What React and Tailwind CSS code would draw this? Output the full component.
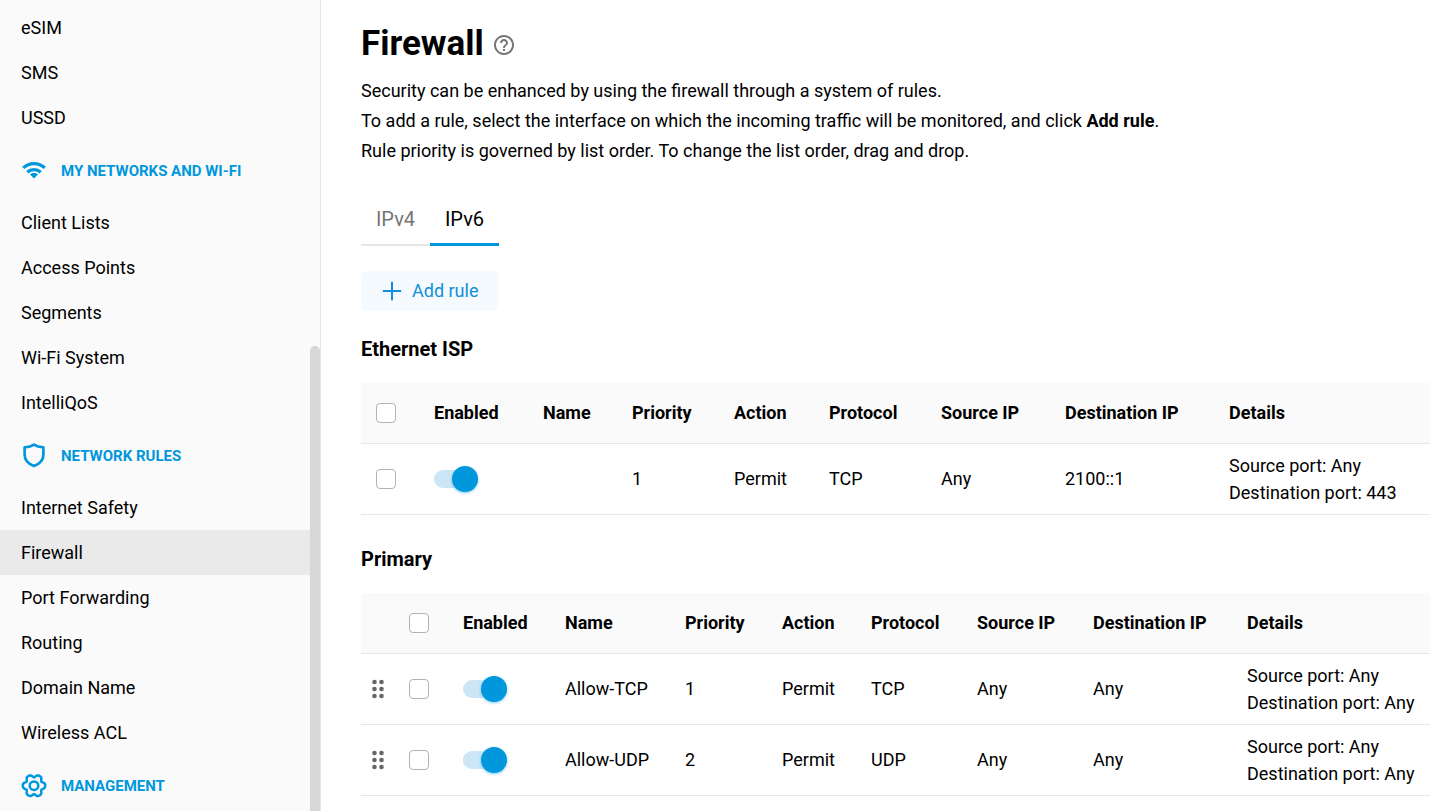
import React from "react";
import { MdHelpOutline } from "react-icons/md";

function WifiIcon() {
  return (
    <svg viewBox="0 0 26 26" className="size-[26px]" fill="none" stroke="currentColor" strokeWidth="3.3" aria-hidden="true">
      <path d="M2.2 10.9 C8.2 5.2 17.8 5.2 23.8 10.9" />
      <path d="M6.3 15.2 C10 11.7 16 11.7 19.7 15.2" />
      <path d="M9 17.4 C11.3 15.6 14.7 15.6 17 17.4 L13 21.6 Z" fill="currentColor" stroke="none" />
    </svg>
  );
}

function ShieldIcon() {
  return (
    <svg viewBox="0 0 26 26" className="size-[26px]" fill="none" stroke="currentColor" strokeWidth="2.7" strokeLinejoin="round" aria-hidden="true">
      <path d="M13 2.6 C10.4 4.3 7.2 5 3.6 5.3 V12.5 C3.6 18 7.2 21.8 13 24.1 C18.8 21.8 22.4 18 22.4 12.5 V5.3 C18.8 5 15.6 4.3 13 2.6 Z" />
    </svg>
  );
}

const gearPath =
  Array.from({ length: 120 }, (_, i) => {
    const a = (i / 120) * Math.PI * 2;
    const r = 10.1 + 1.4 * Math.cos(6 * a) - 0.3 * Math.cos(12 * a);
    return `${i ? "L" : "M"}${(13 + r * Math.cos(a)).toFixed(2)} ${(13.7 + r * Math.sin(a)).toFixed(2)}`;
  }).join(" ") + " Z";

function GearIcon() {
  return (
    <svg viewBox="0 0 26 26" className="size-[26px] overflow-visible" fill="none" stroke="currentColor" strokeWidth="2.5" strokeLinejoin="round" aria-hidden="true">
      <path d={gearPath} />
      <circle cx="13" cy="13.7" r="4.3" />
    </svg>
  );
}

function DragHandle({ name }) {
  return (
    <button type="button" aria-label={`Move ${name}`} className="block cursor-move text-[#666]">
      <svg viewBox="0 0 12 20" className="h-5 w-3" fill="currentColor" aria-hidden="true">
        {[3, 10, 17].map((y) => (
          <g key={y}>
            <circle cx="2.5" cy={y} r="2.3" />
            <circle cx="9.5" cy={y} r="2.3" />
          </g>
        ))}
      </svg>
    </button>
  );
}

const sections = [
  { items: ["eSIM", "SMS", "USSD"] },
  {
    title: "MY NETWORKS AND WI-FI",
    icon: <WifiIcon />,
    items: ["Client Lists", "Access Points", "Segments", "Wi-Fi System", "IntelliQoS"],
  },
  {
    title: "NETWORK RULES",
    icon: <ShieldIcon />,
    items: ["Internet Safety", "Firewall", "Port Forwarding", "Routing", "Domain Name", "Wireless ACL"],
  },
  { title: "MANAGEMENT", icon: <GearIcon />, items: [] },
];

function Sidebar() {
  return (
    <aside className="flex h-screen w-[321px] shrink-0 overflow-hidden border-r border-[#e6e6e6] bg-[#fafafa]">
      <nav className="flex-1 pt-[5px]" aria-label="Main menu">
        {sections.map((s, i) => (
          <section key={i}>
            {s.title && (
              <h2 className="flex h-[60px] items-center gap-[14px] pl-[21px] text-[15px] font-bold text-[#0097dc]">
                {s.icon}
                <span className="pt-0.5">{s.title}</span>
              </h2>
            )}
            <ul>
              {s.items.map((item) => (
                <li key={item}>
                  <a
                    href="#"
                    aria-current={item === "Firewall" ? "page" : undefined}
                    className="flex h-[45px] items-center pl-[21px] aria-[current=page]:bg-[#eaeaea]"
                  >
                    {item}
                  </a>
                </li>
              ))}
            </ul>
          </section>
        ))}
      </nav>
      <div className="flex w-[10px] flex-col pt-[346px]" aria-hidden="true">
        <div className="flex-1 rounded-t-full bg-[#d6d7d9]" />
      </div>
    </aside>
  );
}

function CheckBox({ label }) {
  return (
    <input type="checkbox" aria-label={label} className="block size-5 appearance-none rounded-[4px] border border-[#b3b3b3] bg-white checked:bg-[#0097dc]" />
  );
}

function Toggle({ label }) {
  return (
    <input
      type="checkbox"
      role="switch"
      defaultChecked
      aria-label={label}
      className="flex h-[18px] w-11 appearance-none items-center rounded-full bg-[#cce6f6] before:block before:size-[26px] before:shrink-0 before:rounded-full before:bg-[#0097dc] before:shadow-[0_1px_3px_rgba(0,151,220,0.5)] checked:justify-end"
    />
  );
}

const headers = ["Enabled", "Name", "Priority", "Action", "Protocol", "Source IP", "Destination IP", "Details"];

function RuleTable({ title, rules, draggable, cols }) {
  return (
    <section>
      <h2 className="text-[20px] leading-[30px] font-bold">{title}</h2>
      <table className="mt-[19px] w-full table-fixed border-separate border-spacing-0 text-left" aria-label={title}>
        <colgroup>
          {cols.map((c, i) => (
            <col key={i} className={c} />
          ))}
        </colgroup>
        <thead>
          <tr className="bg-[#fafafa] [&>th]:h-[61px] [&>th]:border-b [&>th]:border-[#e6e6e6] [&>th]:pl-[15px] [&>th]:font-bold [&>th]:whitespace-nowrap">
            {draggable && <th aria-label="Order" />}
            <th>
              <CheckBox label="Select all rules" />
            </th>
            {headers.map((h) => (
              <th key={h} scope="col">
                {h}
              </th>
            ))}
          </tr>
        </thead>
        <tbody>
          {rules.map((r) => (
            <tr key={r.priority} className="[&>td]:h-[71px] [&>td]:border-b [&>td]:border-[#e6e6e6] [&>td]:pl-[15px] [&>td]:whitespace-nowrap">
              {draggable && (
                <td>
                  <div className="-ml-1">
                    <DragHandle name={r.name} />
                  </div>
                </td>
              )}
              <td>
                <CheckBox label={`Select rule ${r.priority}`} />
              </td>
              <td>
                <Toggle label={`Enable rule ${r.priority}`} />
              </td>
              <td>{r.name}</td>
              <td>{r.priority}</td>
              <td>Permit</td>
              <td>{r.protocol}</td>
              <td>Any</td>
              <td>{r.dest}</td>
              <td className="leading-[27px]">
                Source port: Any
                <br />
                Destination port: {r.port}
              </td>
            </tr>
          ))}
        </tbody>
      </table>
    </section>
  );
}

export default function App() {
  return (
    <div className="flex h-screen overflow-hidden bg-white font-[Roboto,sans-serif] text-[18px] leading-[30px] text-black">
      <Sidebar />
      <main className="min-w-0 flex-1 overflow-hidden pt-5 pl-10">
        <div className="flex items-center gap-2">
          <h1 className="text-[35px] leading-[48px] font-bold">Firewall</h1>
          <button type="button" aria-label="Help" className="pt-0.5 text-[#757575]">
            <MdHelpOutline className="size-6" />
          </button>
        </div>
        <p className="mt-2">
          Security can be enhanced by using the firewall through a system of rules.
          <br />
          To add a rule, select the interface on which the incoming traffic will be monitored, and click <b>Add rule</b>.
          <br />
          Rule priority is governed by list order. To change the list order, drag and drop.
        </p>
        <div className="mt-7 flex text-[20px]" role="tablist">
          <button type="button" role="tab" aria-selected="false" className="h-[52px] w-[69px] border-b-2 border-[#e6e6e6] text-[#757575]">
            IPv4
          </button>
          <button type="button" role="tab" aria-selected="true" className="h-[52px] w-[69px] border-b-3 border-[#0097dc]">
            IPv6
          </button>
        </div>
        <button type="button" className="mt-[25px] mb-[23px] flex h-10 items-center gap-[10px] rounded-[5px] bg-[#f4fafd] pr-5 pl-[21px] text-[#0f90d8]">
          <svg viewBox="0 0 20 20" className="size-5" stroke="currentColor" strokeWidth="2" aria-hidden="true">
            <path d="M10 .8v18.4M.8 10h18.4" />
          </svg>
          Add rule
        </button>
        <div className="flex flex-col gap-[29px]">
          <RuleTable
            title="Ethernet ISP"
            rules={[{ name: "", priority: 1, protocol: "TCP", dest: "2100::1", port: "443" }]}
            cols={["w-[58px]", "w-[109px]", "w-[89px]", "w-[102px]", "w-[95px]", "w-[112px]", "w-[124px]", "w-[164px]", ""]}
          />
          <RuleTable
            title="Primary"
            draggable
            rules={[
              { name: "Allow-TCP", priority: 1, protocol: "TCP", dest: "Any", port: "Any" },
              { name: "Allow-UDP", priority: 2, protocol: "UDP", dest: "Any", port: "Any" },
            ]}
            cols={["w-[33px]", "w-[54px]", "w-[102px]", "w-[120px]", "w-[97px]", "w-[89px]", "w-[106px]", "w-[116px]", "w-[154px]", ""]}
          />
        </div>
      </main>
    </div>
  );
}
